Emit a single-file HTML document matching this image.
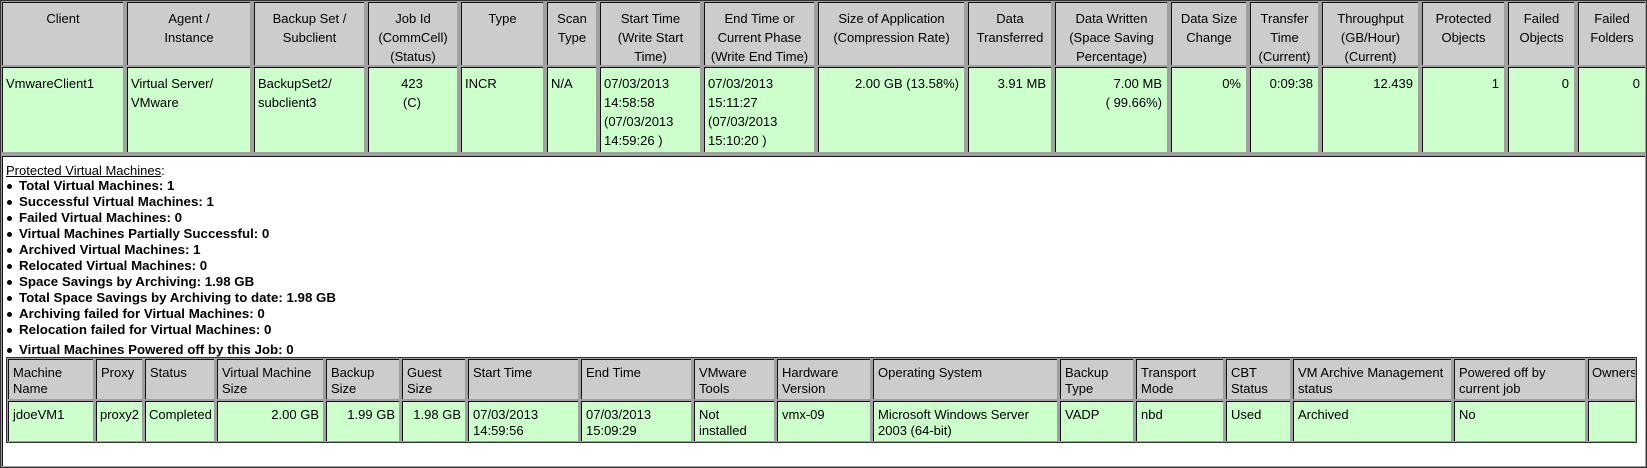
<!DOCTYPE html>
<html><head><meta charset="utf-8"><style>
*{margin:0;padding:0;box-sizing:border-box}
body{width:1647px;height:468px;background:#fff;font-family:"Liberation Sans",Arial,sans-serif;font-size:13px;color:#000;position:relative;overflow:hidden}
.f{position:absolute;background:#a0a0a0;border:1px solid #333}
.c{position:absolute;overflow:hidden;white-space:nowrap;border-left:1px solid #111;border-top:1px solid #111}
.h{background:#ccc;text-align:center;line-height:19px;padding-top:6px}
.d{background:#ccffcc;line-height:19px;padding:6px 5px 0 3px}
.r{text-align:right}
.ct{text-align:center}
.ih{background:#ccc;line-height:16px;padding:5px 4px 0 4px}
.id{background:#ccffcc;line-height:16px;padding:5px 4px 0 4px}
.desc{position:absolute;left:2px;top:156px;width:1643px;height:310px;background:#fff;border-left:1px solid #111;border-top:1px solid #111}
.b{position:absolute;left:6px;font-weight:bold;line-height:16px;white-space:nowrap;font-size:13.3px}
.b:before{content:"";position:absolute;left:1px;top:6px;width:5px;height:5px;border-radius:50%;background:#000}
.b span{margin-left:13px}
</style></head><body>
<div class="f" style="left:0;top:0;width:1647px;height:468px"></div>
<div class="c h" style="left:2px;top:2px;width:121px;height:63px">Client</div>
<div class="c h" style="left:127px;top:2px;width:123px;height:63px">Agent /<br>Instance</div>
<div class="c h" style="left:254px;top:2px;width:110px;height:63px">Backup Set /<br>Subclient</div>
<div class="c h" style="left:368px;top:2px;width:89px;height:63px">Job Id<br>(CommCell)<br>(Status)</div>
<div class="c h" style="left:461px;top:2px;width:82px;height:63px">Type</div>
<div class="c h" style="left:547px;top:2px;width:49px;height:63px">Scan<br>Type</div>
<div class="c h" style="left:600px;top:2px;width:100px;height:63px">Start Time<br>(Write Start<br>Time)</div>
<div class="c h" style="left:704px;top:2px;width:110px;height:63px">End Time or<br>Current Phase<br>(Write End Time)</div>
<div class="c h" style="left:818px;top:2px;width:146px;height:63px">Size of Application<br>(Compression Rate)</div>
<div class="c h" style="left:968px;top:2px;width:83px;height:63px">Data<br>Transferred</div>
<div class="c h" style="left:1055px;top:2px;width:112px;height:63px">Data Written<br>(Space Saving<br>Percentage)</div>
<div class="c h" style="left:1171px;top:2px;width:75px;height:63px">Data Size<br>Change</div>
<div class="c h" style="left:1250px;top:2px;width:68px;height:63px">Transfer<br>Time<br>(Current)</div>
<div class="c h" style="left:1322px;top:2px;width:96px;height:63px">Throughput<br>(GB/Hour)<br>(Current)</div>
<div class="c h" style="left:1422px;top:2px;width:82px;height:63px">Protected<br>Objects</div>
<div class="c h" style="left:1508px;top:2px;width:66px;height:63px">Failed<br>Objects</div>
<div class="c h" style="left:1578px;top:2px;width:67px;height:63px">Failed<br>Folders</div>
<div class="c d" style="left:2px;top:67px;width:121px;height:85px">VmwareClient1</div>
<div class="c d" style="left:127px;top:67px;width:123px;height:85px">Virtual Server/<br>VMware</div>
<div class="c d" style="left:254px;top:67px;width:110px;height:85px">BackupSet2/<br>subclient3</div>
<div class="c d ct" style="left:368px;top:67px;width:89px;height:85px">423<br>(C)</div>
<div class="c d" style="left:461px;top:67px;width:82px;height:85px">INCR</div>
<div class="c d" style="left:547px;top:67px;width:49px;height:85px">N/A</div>
<div class="c d" style="left:600px;top:67px;width:100px;height:85px">07/03/2013<br>14:58:58<br>(07/03/2013<br>14:59:26 )</div>
<div class="c d" style="left:704px;top:67px;width:110px;height:85px">07/03/2013<br>15:11:27<br>(07/03/2013<br>15:10:20 )</div>
<div class="c d r" style="left:818px;top:67px;width:146px;height:85px">2.00 GB (13.58%)</div>
<div class="c d r" style="left:968px;top:67px;width:83px;height:85px">3.91 MB</div>
<div class="c d r" style="left:1055px;top:67px;width:112px;height:85px">7.00 MB<br>( 99.66%)</div>
<div class="c d r" style="left:1171px;top:67px;width:75px;height:85px">0%</div>
<div class="c d r" style="left:1250px;top:67px;width:68px;height:85px">0:09:38</div>
<div class="c d r" style="left:1322px;top:67px;width:96px;height:85px">12.439</div>
<div class="c d r" style="left:1422px;top:67px;width:82px;height:85px">1</div>
<div class="c d r" style="left:1508px;top:67px;width:66px;height:85px">0</div>
<div class="c d r" style="left:1578px;top:67px;width:67px;height:85px">0</div>
<div class="desc"></div>
<div style="position:absolute;left:6px;top:163px;line-height:16px"><u>Protected Virtual Machines</u>:</div>
<div class="b" style="top:178px"><span>Total Virtual Machines: 1</span></div>
<div class="b" style="top:194px"><span>Successful Virtual Machines: 1</span></div>
<div class="b" style="top:210px"><span>Failed Virtual Machines: 0</span></div>
<div class="b" style="top:226px"><span>Virtual Machines Partially Successful: 0</span></div>
<div class="b" style="top:242px"><span>Archived Virtual Machines: 1</span></div>
<div class="b" style="top:258px"><span>Relocated Virtual Machines: 0</span></div>
<div class="b" style="top:274px"><span>Space Savings by Archiving: 1.98 GB</span></div>
<div class="b" style="top:290px"><span>Total Space Savings by Archiving to date: 1.98 GB</span></div>
<div class="b" style="top:306px"><span>Archiving failed for Virtual Machines: 0</span></div>
<div class="b" style="top:322px"><span>Relocation failed for Virtual Machines: 0</span></div>
<div class="b" style="top:342px"><span>Virtual Machines Powered off by this Job: 0</span></div>
<div class="f" style="left:6px;top:357px;width:1631px;height:86px"></div>
<div class="c ih" style="left:8px;top:359px;width:85px;height:40px">Machine<br>Name</div>
<div class="c ih" style="left:96px;top:359px;width:46px;height:40px">Proxy</div>
<div class="c ih" style="left:145px;top:359px;width:69px;height:40px">Status</div>
<div class="c ih" style="left:217px;top:359px;width:106px;height:40px">Virtual Machine<br>Size</div>
<div class="c ih" style="left:326px;top:359px;width:73px;height:40px">Backup<br>Size</div>
<div class="c ih" style="left:402px;top:359px;width:63px;height:40px">Guest<br>Size</div>
<div class="c ih" style="left:468px;top:359px;width:110px;height:40px">Start Time</div>
<div class="c ih" style="left:581px;top:359px;width:110px;height:40px">End Time</div>
<div class="c ih" style="left:694px;top:359px;width:80px;height:40px">VMware<br>Tools</div>
<div class="c ih" style="left:777px;top:359px;width:93px;height:40px">Hardware<br>Version</div>
<div class="c ih" style="left:873px;top:359px;width:184px;height:40px">Operating System</div>
<div class="c ih" style="left:1060px;top:359px;width:73px;height:40px">Backup<br>Type</div>
<div class="c ih" style="left:1136px;top:359px;width:87px;height:40px">Transport<br>Mode</div>
<div class="c ih" style="left:1226px;top:359px;width:64px;height:40px">CBT<br>Status</div>
<div class="c ih" style="left:1293px;top:359px;width:158px;height:40px">VM Archive Management<br>status</div>
<div class="c ih" style="left:1454px;top:359px;width:131px;height:40px">Powered off by<br>current job</div>
<div class="c ih" style="left:1588px;top:359px;width:47px;height:40px;padding-left:3px">Owners</div>
<div class="c id" style="left:8px;top:401px;width:85px;height:40px">jdoeVM1</div>
<div class="c id" style="left:96px;top:401px;width:46px;height:40px;padding-left:3px">proxy2</div>
<div class="c id" style="left:145px;top:401px;width:69px;height:40px;padding-left:3px">Completed</div>
<div class="c id r" style="left:217px;top:401px;width:106px;height:40px">2.00 GB</div>
<div class="c id r" style="left:326px;top:401px;width:73px;height:40px">1.99 GB</div>
<div class="c id r" style="left:402px;top:401px;width:63px;height:40px">1.98 GB</div>
<div class="c id" style="left:468px;top:401px;width:110px;height:40px">07/03/2013<br>14:59:56</div>
<div class="c id" style="left:581px;top:401px;width:110px;height:40px">07/03/2013<br>15:09:29</div>
<div class="c id" style="left:694px;top:401px;width:80px;height:40px">Not<br>installed</div>
<div class="c id" style="left:777px;top:401px;width:93px;height:40px">vmx-09</div>
<div class="c id" style="left:873px;top:401px;width:184px;height:40px">Microsoft Windows Server<br>2003 (64-bit)</div>
<div class="c id" style="left:1060px;top:401px;width:73px;height:40px">VADP</div>
<div class="c id" style="left:1136px;top:401px;width:87px;height:40px">nbd</div>
<div class="c id" style="left:1226px;top:401px;width:64px;height:40px">Used</div>
<div class="c id" style="left:1293px;top:401px;width:158px;height:40px">Archived</div>
<div class="c id" style="left:1454px;top:401px;width:131px;height:40px">No</div>
<div class="c id" style="left:1588px;top:401px;width:47px;height:40px"></div>
</body></html>
